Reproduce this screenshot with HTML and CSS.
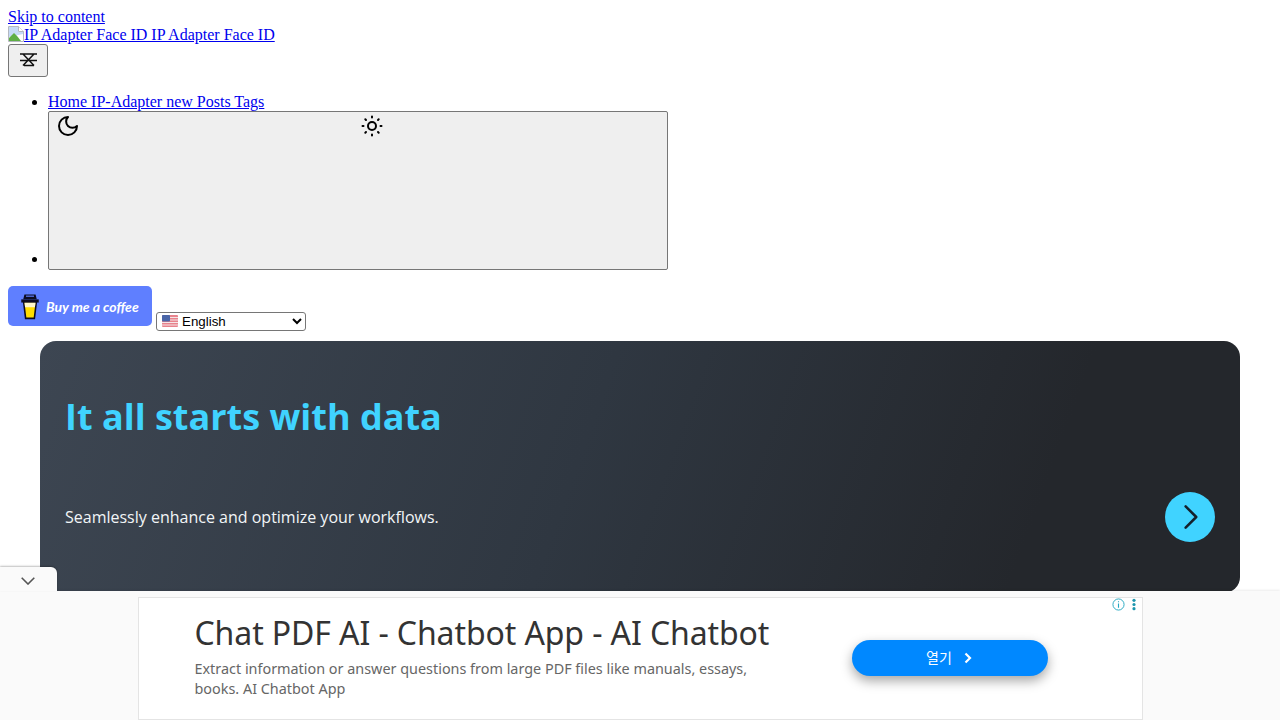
FILE: index.html
```html
<!DOCTYPE html>
<html lang="en">
<head>
  <meta charset="UTF-8">
  <title>IP Adapter Face ID</title>
  <link rel="stylesheet" href="styles.css">
</head>
<body>
  <a href="#content" class="skip-link">Skip to content</a>
  <div>
    <a href="#">
      <svg class="broken-img" viewBox="0 0 16 16" aria-hidden="true">
        <path d="M.5.5h10l5 5v10H.5z" fill="#fff" stroke="#b4b8c0"/>
        <path d="M1 1h9v5h5v2L1 11z" fill="#c6daf6"/>
        <path d="M1 15v-3l5-5 3 3 4 5z" fill="#5fae45"/>
        <path d="M10.500.5v5h5" fill="#fff" stroke="#b4b8c0"/>
      </svg>IP Adapter Face ID IP Adapter Face ID</a>
  </div>
  <button class="menu-btn" aria-label="Menu">
    <svg viewBox="0 0 20 16" width="20" height="16" aria-hidden="true">
      <path d="M2 2h17M2 8.500h17M6 13.500h10M5 2l11 11.500M16 2 5 13.500" fill="none" stroke="#111" stroke-width="1.500"/>
    </svg>
  </button>

  <ul class="nav">
    <li><a href="#">Home IP-Adapter new Posts Tags</a></li>
    <li>
      <button class="theme-btn" aria-label="Theme">
        <span class="theme-icons">
          <svg viewBox="0 0 24 24" width="24" height="24" aria-hidden="true">
            <path d="M12 3a6 6 0 0 0 9 9 9 9 0 1 1-9-9Z" fill="none" stroke="#000" stroke-width="2" stroke-linecap="round" stroke-linejoin="round"/>
          </svg>
          <svg viewBox="0 0 24 24" width="24" height="24" aria-hidden="true">
            <circle cx="12" cy="12" r="4" fill="none" stroke="#000" stroke-width="2"/>
            <path d="M12 2.500v1M12 20.500v1M5.300 5.300l.7.7M18 18l.7.7M2.500 12h1M20.500 12h1M6 18l-.7.7M18.700 5.300l-.7.7" fill="none" stroke="#000" stroke-width="2" stroke-linecap="round"/>
          </svg>
        </span>
      </button>
    </li>
  </ul>

  <div class="tools">
    <a href="#" class="coffee">
      <svg viewBox="0 0 24 34" width="20" height="27" aria-hidden="true">
        <path d="M4 11h16l-2.500 21h-11z" fill="#ffdd00" stroke="#0d0c22" stroke-width="2"/>
        <path d="M5 12h14l-.8 6H5.800z" fill="#fff" opacity=".8"/>
        <path d="M1 8h22v4H1z" fill="#0d0c22"/>
        <path d="M5 2h14l1.500 6h-17z" fill="#0d0c22"/>
        <path d="M7 4h10" stroke="#5f7fff" stroke-width="1.500"/>
      </svg>
      <span>Buy me a coffee</span>
    </a>
    <span class="lang">
      <svg class="flag" viewBox="0 0 16 12" width="16" height="12" aria-hidden="true">
        <rect width="16" height="12" rx="1" fill="#e8828c"/>
        <path d="M0 2.500h16M0 5h16M0 7.500h16M0 10h16" stroke="#f4e4e6" stroke-width="1"/>
        <rect width="8" height="6.500" rx="1" fill="#4a66a8"/>
      </svg>
      <select class="lang-select">
        <option>English</option>
      </select>
    </span>
  </div>

  <section class="banner" id="content">
    <h2>It all starts with data</h2>
    <div class="banner-foot">
      <p>Seamlessly enhance and optimize your workflows.</p>
      <a href="#" class="banner-go" aria-label="Go">
        <svg viewBox="0 0 24 24" width="30" height="30" aria-hidden="true">
          <path d="M8.500 3.500 17 12l-8.500 8.500" fill="none" stroke="#14202b" stroke-width="2" stroke-linecap="round" stroke-linejoin="round"/>
        </svg>
      </a>
    </div>
  </section>

  <div class="ad-bar">
    <button class="ad-toggle" aria-label="Collapse">
      <svg viewBox="0 0 14 8" width="14" height="8" aria-hidden="true">
        <path d="M.7.7 7 7 13.300.7" fill="none" stroke="#555" stroke-width="1.600"/>
      </svg>
    </button>
    <div class="ad">
      <div class="ad-marks">
        <svg viewBox="0 0 14 14" width="13" height="13" aria-hidden="true">
          <circle cx="7" cy="7" r="6" fill="none" stroke="#22a6c0"/>
          <path d="M7 6v4.500M7 3.500v1.200" stroke="#22a6c0" stroke-width="1.200"/>
        </svg>
        <svg viewBox="0 0 4 14" width="4" height="13" aria-hidden="true">
          <circle cx="2" cy="2.500" r="1.700" fill="#1d96ae"/>
          <circle cx="2" cy="7" r="1.700" fill="#1d96ae"/>
          <circle cx="2" cy="11.500" r="1.700" fill="#1d96ae"/>
        </svg>
      </div>
      <div class="ad-copy">
        <div class="ad-title">Chat PDF AI - Chatbot App - AI Chatbot</div>
        <div class="ad-text">Extract information or answer questions from large PDF files like manuals, essays, books. AI Chatbot App</div>
      </div>
      <a href="#" class="ad-cta">
        <span>열기</span>
        <svg viewBox="0 0 10 12" width="10" height="12" aria-hidden="true">
          <path d="M2.500 1.500 7 6l-4.500 4.500" fill="none" stroke="#fff" stroke-width="2.200"/>
        </svg>
      </a>
    </div>
  </div>
</body>
</html>
```

FILE: styles.css
```css
body {
  font-family: "Liberation Serif", serif;
  font-size: 16px;
  line-height: 18px;
  overflow: hidden;
}
.broken-img {
  width: 16px;
  height: 16px;
  vertical-align: -2px;
}
.menu-btn {
  display: block;
  width: 40px;
  height: 33px;
  padding: 0;
  background: #efefef;
  border: 1px solid #767676;
  border-radius: 3px;
}
.menu-btn svg {
  display: block;
  margin: 0 auto 2px;
}
.nav {
  margin: 16px 0;
  padding-left: 40px;
}
.theme-btn {
  width: 620px;
  height: 159px;
  padding: 0;
  background: #efefef;
  border: 1px solid #767676;
  border-radius: 2px;
  vertical-align: bottom;
  margin-bottom: -2px;
}
.theme-icons {
  display: grid;
  grid-template-columns: 304px 24px;
  height: 157px;
  padding: 2px 0 0 7px;
  box-sizing: border-box;
}
.tools {
  height: 47px;
  display: flex;
  align-items: flex-end;
  gap: 4px;
}
.coffee {
  width: 144px;
  height: 40px;
  margin-bottom: 5px;
  display: flex;
  align-items: center;
  gap: 6px;
  padding-left: 12px;
  box-sizing: border-box;
  background: #5f7fff;
  border-radius: 5px;
  color: #fff;
  font: italic 700 14px Lato, sans-serif;
  text-decoration: none;
  white-space: nowrap;
}
.lang {
  position: relative;
  display: block;
  height: 19px;
}
.flag {
  position: absolute;
  left: 6px;
  top: 3px;
}
.lang-select {
  display: block;
  width: 150px;
  height: 19px;
  padding-left: 21px;
  box-sizing: border-box;
  font: 13.330px "Liberation Sans", sans-serif;
  background: #fff;
  color: #000;
  border: 1px solid #767676;
  border-radius: 3px;
}
.banner {
  width: 1200px;
  height: 252px;
  margin: 10px 0 0 32px;
  padding: 51px 25px 0;
  box-sizing: border-box;
  border-radius: 16px;
  background: linear-gradient(110deg, #3d4652 0%, #2f3741 45%, #24272c 82%, #24272c 100%);
  font-family: "Open Sans", sans-serif;
}
.banner h2 {
  margin: 0;
  font-size: 36px;
  line-height: 50px;
  font-weight: 700;
  color: #40d3ff;
}
.banner-foot {
  display: flex;
  justify-content: space-between;
  align-items: center;
  margin-top: 50px;
}
.banner-foot p {
  margin: 0;
  font-size: 16px;
  line-height: 24px;
  color: #f2f5f7;
}
.banner-go {
  width: 50px;
  height: 50px;
  display: flex;
  align-items: center;
  justify-content: center;
  border-radius: 50%;
  background: #40d3ff;
}
.ad-bar {
  position: fixed;
  left: 0;
  right: 0;
  bottom: 0;
  height: 129px;
  box-sizing: border-box;
  padding-top: 6px;
  display: flex;
  justify-content: center;
  background: #fafafa;
  box-shadow: 0 -1px 2px rgba(0,0,0,0.08);
}
.ad-toggle {
  position: absolute;
  left: 0;
  top: -24px;
  width: 57px;
  height: 24px;
  padding: 3px 1px 0 0;
  background: #fafafa;
  border: none;
  border-radius: 0 6px 0 0;
  box-shadow: 0 -1px 2px rgba(0,0,0,0.25);
  display: flex;
  align-items: center;
  justify-content: center;
}
.ad {
  position: relative;
  width: 1005px;
  height: 123px;
  box-sizing: border-box;
  padding: 15px 94px 0 56px;
  display: flex;
  justify-content: space-between;
  background: #fff;
  border: 1px solid #e4e4e4;
  font-family: "Noto Sans", "Noto Sans CJK KR", sans-serif;
}
.ad-marks {
  position: absolute;
  top: 0;
  right: 6px;
  display: flex;
  align-items: center;
  gap: 7px;
}
.ad-title {
  font-size: 32px;
  line-height: 40px;
  letter-spacing: -0.1px;
  color: #333;
  white-space: nowrap;
}
.ad-text {
  width: 580px;
  margin-top: 6px;
  font-size: 14.400px;
  line-height: 20px;
  color: #666;
}
.ad-cta {
  width: 196px;
  height: 36px;
  margin-top: 27px;
  display: flex;
  align-items: center;
  justify-content: center;
  gap: 11px;
  background: #0088ff;
  border-radius: 18px;
  box-shadow: 0 5px 12px rgba(0,0,0,0.35);
  color: #fff;
  font-size: 14px;
  text-decoration: none;
}
```
